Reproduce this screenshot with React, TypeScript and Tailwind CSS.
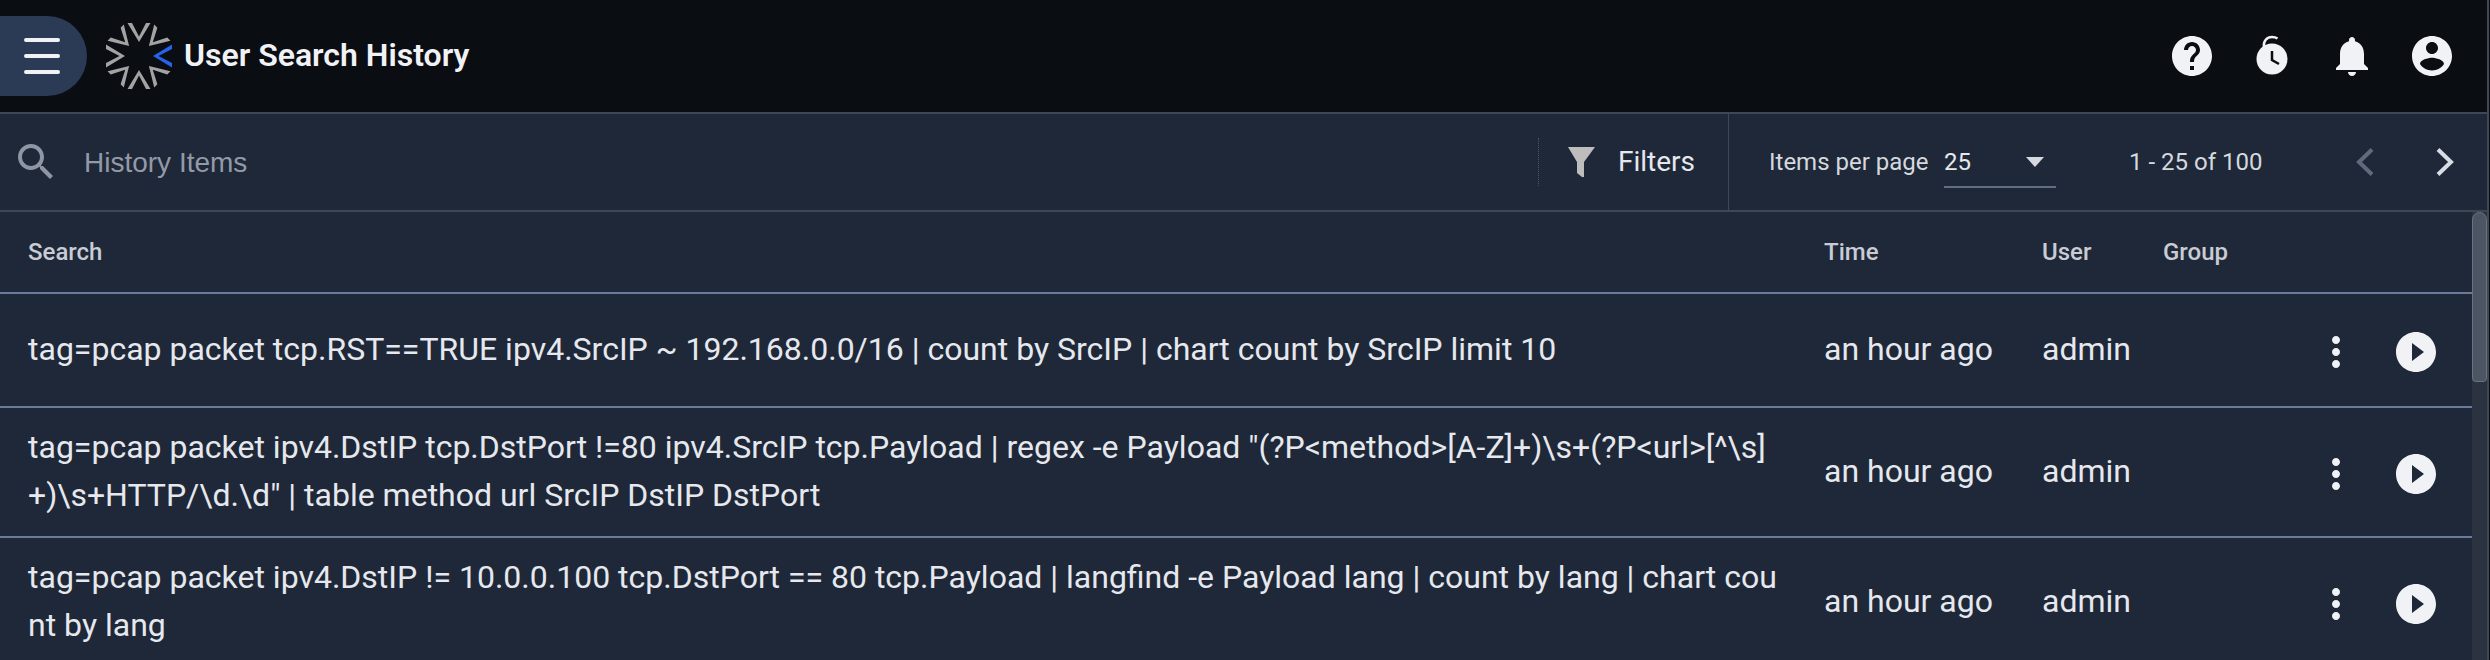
import React from 'react';

const rows = [
  'tag=pcap packet tcp.RST==TRUE ipv4.SrcIP ~ 192.168.0.0/16 | count by SrcIP | chart count by SrcIP limit 10',
  'tag=pcap packet ipv4.DstIP tcp.DstPort !=80 ipv4.SrcIP tcp.Payload | regex -e Payload "(?P<method>[A-Z]+)\\s+(?P<url>[^\\s]+)\\s+HTTP/\\d.\\d" | table method url SrcIP DstIP DstPort',
  'tag=pcap packet ipv4.DstIP != 10.0.0.100 tcp.DstPort == 80 tcp.Payload | langfind -e Payload lang | count by lang | chart count by lang',
];

const Icon = ({ d, className }: { d: string; className?: string }) => (
  <svg viewBox="0 0 24 24" fill="currentColor" className={className ?? 'w-12 h-12'}>
    <path d={d} />
  </svg>
);

const Logo = () => (
  <svg viewBox="-34 -34 68 68" className="w-[68px] h-[68px]">
    {[45, 90, 135, 180, 225, 270, 315, 0].map((deg) => (
      <polygon
        key={deg}
        points="14,0 33,-11.500 33,-7 19.500,0 33,7 33,11.500"
        fill={deg === 0 ? '#2563eb' : '#a3a3a3'}
        transform={`rotate(${deg})`}
      />
    ))}
  </svg>
);

const TimerIcon = () => (
  <svg viewBox="0 0 48 48" className="w-12 h-12" fill="none">
    <circle cx="24" cy="27" r="15.5" fill="currentColor" />
    <path d="M16 15c-1-6 3-10 8-10 2 0 4 .5 5.500 1.500" stroke="currentColor" strokeWidth="2.500" />
    <path d="M24 19v9l7 4" stroke="#0a0d12" strokeWidth="2.500" />
  </svg>
);

const App: React.FC = () => {
  return (
    <div className="w-[2490px] h-[660px] overflow-hidden bg-[#0a0d12] flex font-[Roboto,sans-serif]">
      <div className="w-[2489px] h-full flex flex-col border-r-2 border-[#3f4754]">
        {/* top bar */}
        <header className="h-[114px] shrink-0 flex items-center border-b-2 border-[#3f4754] bg-[#0a0d12] text-[#f1f2f6] pr-[15px]">
          <button className="w-[87px] h-[80px] rounded-r-[40px] bg-[#2b3b55] flex flex-col gap-[12px] pl-6 justify-center">
            <span className="block w-9 h-1 rounded-sm bg-[#f1f2f6]" />
            <span className="block w-9 h-1 rounded-sm bg-[#f1f2f6]" />
            <span className="block w-9 h-1 rounded-sm bg-[#f1f2f6]" />
          </button>
          <div className="ml-[18px]">
            <Logo />
          </div>
          <h1 className="ml-[11px] text-[32px] font-semibold -mt-[2px]">User Search History</h1>
          <div className="ml-auto flex">
            <div className="w-20 flex justify-center">
              <Icon d="M12 2C6.48 2 2 6.48 2 12s4.48 10 10 10 10-4.48 10-10S17.52 2 12 2zm1 17h-2v-2h2v2zm2.070-7.750l-.9.920C13.450 12.900 13 13.500 13 15h-2v-.5c0-1.100.450-2.100 1.170-2.830l1.240-1.260c.370-.360.590-.860.590-1.410 0-1.100-.9-2-2-2s-2 .9-2 2H8c0-2.210 1.790-4 4-4s4 1.790 4 4c0 .880-.360 1.680-.930 2.250z" />
            </div>
            <div className="w-20 flex justify-center">
              <TimerIcon />
            </div>
            <div className="w-20 flex justify-center">
              <Icon d="M12 22c1.100 0 2-.9 2-2h-4c0 1.100.890 2 2 2zm6-6v-5c0-3.070-1.640-5.640-4.500-6.320V4c0-.830-.670-1.500-1.500-1.500s-1.500.670-1.500 1.500v.680C7.630 5.360 6 7.920 6 11v5l-2 2v1h16v-1l-2-2z" />
            </div>
            <div className="w-20 flex justify-center">
              <Icon d="M12 2C6.480 2 2 6.480 2 12s4.480 10 10 10 10-4.480 10-10S17.520 2 12 2zm0 3c1.660 0 3 1.340 3 3s-1.340 3-3 3-3-1.340-3-3 1.340-3 3-3zm0 14.200c-2.500 0-4.710-1.280-6-3.220.030-1.990 4-3.080 6-3.080 1.990 0 5.970 1.090 6 3.080-1.290 1.940-3.500 3.220-6 3.220z" />
            </div>
          </div>
        </header>

        {/* toolbar */}
        <div className="h-[98px] shrink-0 flex items-center border-b-2 border-[#3f4754] bg-[#1e2838] text-[#e6e8ee]">
          <div className="w-[1538px] flex items-center pl-3">
            <Icon className="w-12 h-12 text-[#8f96a3]" d="M15.500 14h-.790l-.280-.270C15.410 12.590 16 11.110 16 9.500 16 5.910 13.090 3 9.500 3S3 5.910 3 9.500 5.910 16 9.500 16c1.610 0 3.090-.590 4.230-1.570l.270.280v.790l5 4.990L20.490 19l-4.990-5zm-6 0C7.010 14 5 11.990 5 9.500S7.010 5 9.500 5 14 7.010 14 9.500 11.990 14 9.500 14z" />
            <input
              readOnly
              placeholder="History Items"
              className="ml-6 mt-[2px] flex-1 bg-transparent outline-none text-[28px] font-['Liberation_Sans',sans-serif] placeholder:text-[#939aa6]"
            />
          </div>
          <div className="w-px h-12 border-l border-dotted border-[#4b5563]" />
          <div className="w-[190px] h-full flex items-center border-r border-[#3f4754] pl-[29px]">
            <svg viewBox="0 0 27 31" className="w-[27px] h-[31px]">
              <path d="M0 0H27L16 15V30H14L9 26V15Z" fill="#bdbdbd" />
            </svg>
            <span className="ml-[23px] text-[28px]">Filters</span>
          </div>
          <div className="flex-1 h-full flex items-center pl-10">
            <span className="w-[175px] text-[24px] text-[#d5d8df]">Items per page</span>
            <div className="w-[112px] h-[50px] flex items-center justify-between border-b-2 border-[#5f6d85] pr-3 mt-[2px]">
              <span className="text-[24px]">25</span>
              <span className="w-0 h-0 border-x-[9px] border-x-transparent border-t-[10px] border-t-[#d5d8df]" />
            </div>
            <span className="ml-[73px] text-[24px] text-[#d5d8df]">1 - 25 of 100</span>
            <svg viewBox="0 0 18 28" className="w-[18px] h-7 ml-[94px]" fill="none">
              <path d="M16 1.500 3 14l13 12.500" stroke="#5f6b7c" strokeWidth="4" />
            </svg>
            <svg viewBox="0 0 18 28" className="w-[18px] h-7 ml-[62px]" fill="none">
              <path d="M2 1.500 15 14 2 26.500" stroke="#d8dce6" strokeWidth="4" />
            </svg>
          </div>
        </div>

        {/* table and scrollbar */}
        <div className="flex-1 flex min-h-0 bg-[#1e2838]">
          <div className="flex-1 text-[#e6e8ee]">
            <div className="h-[82px] grid grid-cols-[1824px_218px_121px_1fr] items-center border-b-2 border-[#6b7a99] text-[24px] font-medium text-[#c9ccd4]">
              <span className="pl-7">Search</span>
              <span>Time</span>
              <span>User</span>
              <span>Group</span>
            </div>
            {rows.map((q, i) => (
              <div
                key={i}
                className="min-h-[114px] grid grid-cols-[1824px_218px_121px_1fr] items-center border-b-2 border-[#6b7a99] text-[32px] leading-[48px] py-4"
              >
                <div className="pl-7 pr-[44px] break-all -translate-y-[1.500px]">{q}</div>
                <span className="-translate-y-[1.500px]">an hour ago</span>
                <span className="-translate-y-[1.500px]">admin</span>
                <div className="flex justify-end items-center gap-9 pr-9 pt-[4px] text-[#f1f2f6]">
                  <Icon d="M12 8c1.100 0 2-.9 2-2s-.9-2-2-2-2 .9-2 2 .9 2 2 2zm0 2c-1.100 0-2 .9-2 2s.9 2 2 2 2-.9 2-2-.9-2-2-2zm0 6c-1.100 0-2 .9-2 2s.9 2 2 2 2-.9 2-2-.9-2-2-2z" />
                  <Icon className="w-12 h-12 -mx-1" d="M12 2C6.480 2 2 6.480 2 12s4.480 10 10 10 10-4.480 10-10S17.520 2 12 2zm-2 14.500v-9l6 4.500-6 4.500z" />
                </div>
              </div>
            ))}
          </div>
          <div className="w-[15px] shrink-0 bg-[#2b3340]">
            <div className="h-[170px] rounded-t-lg rounded-b-sm bg-[#4b5563] border border-[#6b7280]" />
          </div>
        </div>
      </div>
    </div>
  );
};

export default App;
